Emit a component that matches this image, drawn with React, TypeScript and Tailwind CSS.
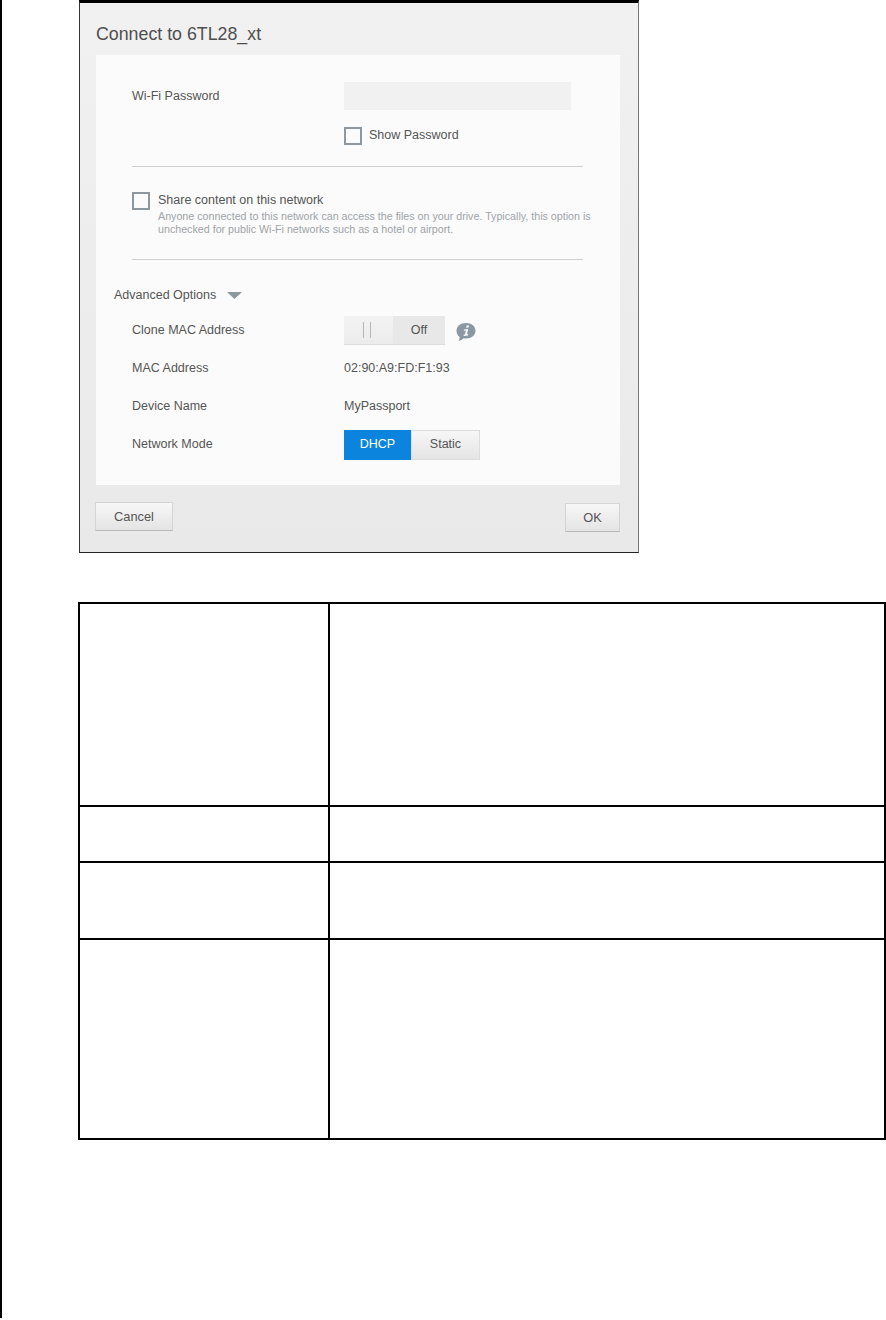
const Checkbox = () => (
  <div className="w-[18px] h-[18px] shrink-0 border-2 border-[#8f979e] bg-[#fbfbfb]" />
)

const Row = ({ label, children }: { label: string; children: React.ReactNode }) => (
  <div className="flex items-center pl-9">
    <div className="w-[212px] text-[12.5px] text-[#555]">{label}</div>
    {children}
  </div>
)

const InfoIcon = () => (
  <svg width="20" height="18" viewBox="0 0 20 18" className="ml-[11px] mt-[2px]">
    <path d="M10 0C15.5 0 19.5 3.3 19.5 7.8S15.5 15.5 10 15.5C9.2 15.5 8.4 15.4 7.6 15.3C6.4 16.8 4.6 17.7 2.4 18C3.2 16.8 3.6 15.6 3.6 14C1.6 12.6 0.5 10.4 0.5 7.8C0.5 3.3 4.5 0 10 0Z" fill="#8a98a4" />
    <path d="M10.6 2.6L13 2.4L12.6 4.6L10.2 4.8ZM8 6.4L12.2 6L11 11.2L12.2 11.1L11.9 12.6L7.6 13L7.9 11.6L8.9 11.5L9.8 7.6L7.8 7.7Z" fill="#fbfbfb" />
  </svg>
)

const FooterButton = ({ label, className }: { label: string; className: string }) => (
  <button className={`h-[29px] bg-gradient-to-b from-[#f7f7f7] to-[#e4e4e4] border border-[#d4d4d4] border-b-[#b9b9b9] text-[12.8px] text-[#555] ${className}`}>
    {label}
  </button>
)

const Dialog = () => (
  <div className="w-[560px] h-[553px] bg-gradient-to-b from-[#f1f1f1] to-[#e9e9e9] border-t-[3px] border-t-black border-l border-l-[#333] border-r border-r-[#777] border-b border-b-[#222] pl-4 pr-[18px]">
    <div className="h-[52px] pt-[21px] text-[17.8px] leading-5 text-[#4f4f4f]">Connect to 6TL28_xt</div>

    <div className="h-[430px] bg-[#fbfbfb] pt-[27px]">
      <Row label="Wi-Fi Password">
        <div className="w-[227px] h-[28px] bg-[#f1f1f1]" />
      </Row>
      <div className="flex items-center gap-[7px] ml-[248px] mt-[17px]">
        <Checkbox />
        <span className="text-[12.5px] -mt-[2px] text-[#555]">Show Password</span>
      </div>
      <div className="ml-9 w-[451px] h-px bg-[#cfcfcf] mt-[21px]" />

      <div className="flex gap-2 ml-9 mt-[25px]">
        <Checkbox />
        <div>
          <div className="text-[12.5px] leading-4 text-[#555]">Share content on this network</div>
          <div className="text-[10.7px] leading-[13px] mt-[2px] text-[#a0a4a8] w-[450px]">
            Anyone connected to this network can access the files on your drive. Typically, this option is unchecked for public Wi-Fi networks such as a hotel or airport.
          </div>
        </div>
      </div>
      <div className="ml-9 w-[451px] h-px bg-[#cfcfcf] mt-[23px]" />

      <div className="flex items-center ml-[18px] mt-[27px] h-4">
        <span className="text-[12.5px] text-[#555]">Advanced Options</span>
        <svg width="15" height="7" viewBox="0 0 15 7" className="ml-[11px]">
          <path d="M0 0H15L7.5 7Z" fill="#8d979e" />
        </svg>
      </div>

      <div className="mt-[13px]">
        <Row label="Clone MAC Address">
          <div className="flex w-[101px] h-[29px] border-b border-[#dddddd]">
            <div className="w-[49px] flex items-center justify-center gap-[6px] pr-1 bg-gradient-to-b from-[#f3f3f3] to-[#ececec]">
              <div className="w-px h-[16px] bg-[#b5b5b5]" />
              <div className="w-px h-[16px] bg-[#b5b5b5]" />
            </div>
            <div className="flex-1 flex items-center justify-center bg-[#e8e8e8] text-[12.5px] text-[#555]">Off</div>
          </div>
          <InfoIcon />
        </Row>
      </div>
      <div className="mt-[14px]">
        <Row label="MAC Address">
          <span className="text-[12.5px] leading-4 text-[#555]">02:90:A9:FD:F1:93</span>
        </Row>
      </div>
      <div className="mt-[19px]">
        <Row label="Device Name">
          <span className="text-[12.5px] leading-4 text-[#555]">MyPassport</span>
        </Row>
      </div>
      <div className="mt-[14px]">
        <Row label="Network Mode">
          <div className="flex h-[30px] text-[12.5px]">
            <div className="w-[67px] flex items-center justify-center bg-[#0a84dc] text-white">DHCP</div>
            <div className="w-[69px] flex items-center justify-center bg-gradient-to-b from-[#f7f7f7] to-[#e4e4e4] border border-[#dcdcdc] text-[#555]">Static</div>
          </div>
        </Row>
      </div>
    </div>

    <div className="flex justify-between mt-[17px] -ml-px">
      <FooterButton label="Cancel" className="w-[78px]" />
      <FooterButton label="OK" className="w-[55px] mt-px" />
    </div>
  </div>
)

// divide-y draws inside each row's box, so all rows but the last carry 2px extra
const tableRows = ['h-[203px]', 'h-[56px]', 'h-[77px]', 'h-[198px]']

const EmptyTable = () => (
  <div className="w-[808px] -ml-px mt-[49px] border-2 border-black divide-y-2 divide-black">
    {tableRows.map((height) => (
      <div key={height} className={`flex ${height}`}>
        <div className="w-[250px] border-r-2 border-black" />
        <div className="flex-1" />
      </div>
    ))}
  </div>
)

export default function App() {
  return (
    <div className="w-[886px] h-[1320px] bg-white font-['Liberation_Sans',Arial,sans-serif] overflow-hidden">
      <div className="h-[1318px] border-l-2 border-black pl-[77px]">
        <Dialog />
        <EmptyTable />
      </div>
    </div>
  )
}
